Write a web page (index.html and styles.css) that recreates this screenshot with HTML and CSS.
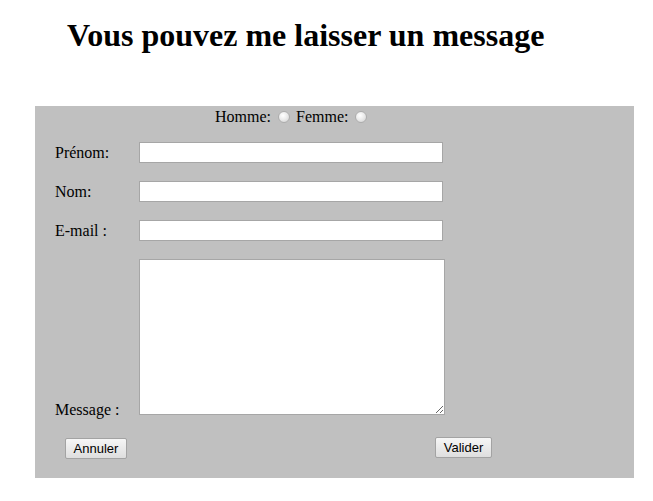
FILE: index.html
```html
<!DOCTYPE html>
<html lang="fr">
<head>
<meta charset="utf-8">
<title>Contact</title>
<link rel="stylesheet" href="styles.css">
</head>
<body>
<h1 class="title">Vous pouvez me laisser un message</h1>
<form class="contact">
  <div class="gender">Homme: <input class="radio" type="radio" name="sexe"> Femme: <input class="radio" type="radio" name="sexe"></div>
  <div class="row"><label class="label">Prénom:</label><input class="field" type="text"></div>
  <div class="row"><label class="label">Nom:</label><input class="field" type="text"></div>
  <div class="row"><label class="label">E-mail :</label><input class="field" type="text"></div>
  <div class="row row-message"><label class="label label-message">Message :</label><textarea class="area"></textarea></div>
  <div class="actions"><button class="btn btn-reset" type="reset">Annuler</button><button class="btn btn-submit" type="button">Valider</button></div>
</form>
</body>
</html>
```
FILE: styles.css
```css
html, body {
  margin: 0;
  padding: 0;
  background: #ffffff;
}
body {
  font-family: "Liberation Serif", "Times New Roman", serif;
  font-size: 16px;
  color: #000;
}
.title {
  margin: 0;
  padding: 17px 0 0 67px;
  font-size: 32px;
  font-weight: bold;
  line-height: 36px;
}
.contact {
  box-sizing: border-box;
  width: 599px;
  height: 372px;
  margin: 53px 0 0 35px;
  padding-top: 2px;
  background: #c0c0c0;
}
.gender {
  padding-left: 180px;
  line-height: 18px;
  height: 18px;
}
.radio {
  appearance: none;
  -webkit-appearance: none;
  box-sizing: border-box;
  width: 12px;
  height: 12px;
  margin: 0 2px 0 3px;
  border: 1px solid #adadad;
  border-radius: 50%;
  background: radial-gradient(circle at 40% 35%, #ffffff 0%, #ececec 45%, #cfcfcf 100%);
  vertical-align: -1px;
}
.row {
  display: flex;
  align-items: center;
  padding-left: 20px;
  margin-top: 18px;
}
.gender + .row {
  margin-top: 16px;
}
.label {
  width: 84px;
  flex: none;
  line-height: 18px;
}
.field {
  box-sizing: border-box;
  width: 304px;
  height: 21px;
  margin: 0;
  padding: 1px 2px;
  border: 1px solid #a6a6a6;
  background: #fff;
  font: 13px "Liberation Sans", Arial, sans-serif;
}
.row-message {
  align-items: flex-end;
}
.label-message {
  margin-bottom: -4px;
}
.area {
  box-sizing: border-box;
  width: 306px;
  height: 156px;
  margin: 0;
  padding: 2px;
  border: 1px solid #a6a6a6;
  background: #fff;
  font: 13px "Liberation Mono", monospace;
}
.actions {
  display: flex;
  justify-content: space-between;
  align-items: flex-start;
  margin-top: 22px;
  padding: 0 142px 0 30px;
}
.btn {
  box-sizing: border-box;
  height: 21px;
  margin: 0;
  padding: 0 7px;
  border: 1px solid #a3a3a3;
  border-radius: 2px;
  background: linear-gradient(#f6f6f6, #dedede);
  font: 13px "Liberation Sans", Arial, sans-serif;
  color: #000;
  line-height: 19px;
}
.btn-reset {
  width: 62px;
  margin-top: 1px;
}
.btn-submit {
  width: 57px;
}
```
